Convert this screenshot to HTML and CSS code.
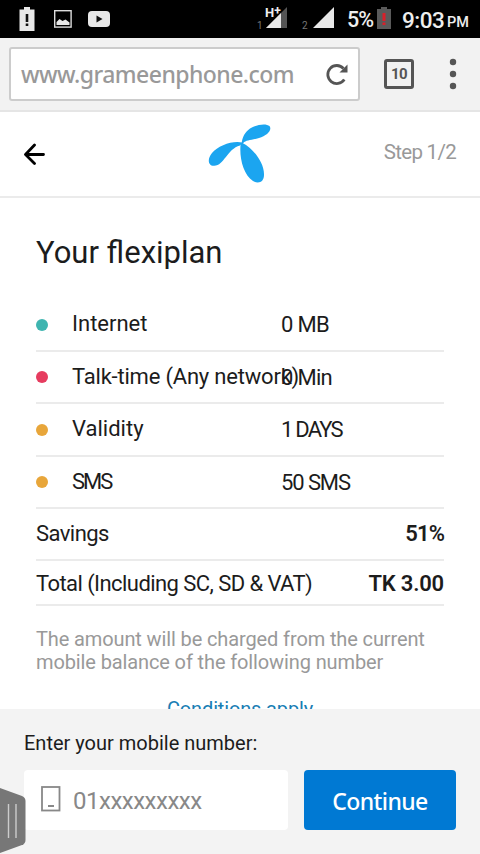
FILE: index.html
```html
<!DOCTYPE html>
<html lang="en">
<head>
<meta charset="utf-8">
<meta name="viewport" content="width=device-width, initial-scale=1">
<title>Your flexiplan</title>
<link rel="stylesheet" href="styles.css">
</head>
<body>
<div class="phone">
  <div class="status">
    <svg class="status-left" width="120" height="38" viewBox="0 0 120 38">
      <path fill="#e8e8e8" d="M19.500 9.500h4.500V7h6v2.500h4.500V31h-15z"/>
      <path fill="#111" d="M25.700 14h2.600v8h-2.600zM25.700 23.500h2.600v2.500h-2.600z"/>
      <rect x="54.700" y="10.700" width="16.400" height="16.400" fill="none" stroke="#ddd" stroke-width="1.400"/>
      <path fill="#e8e8e8" d="M56.500 25v-3l3-3 3 2 3-1.500 4 3v2.500z"/>
      <rect x="88" y="11" width="22" height="16" rx="4" fill="#e8e8e8"/>
      <path fill="#111" d="M96.500 15.500v7l6-3.500z"/>
    </svg>
    <div class="status-right">
      <span class="sim">1</span>
      <span class="signal"><svg width="22" height="21" viewBox="0 0 22 21"><path fill="#555" d="M22 0v21H1z"/><path fill="#e8e8e8" d="M16 6v15H1z"/></svg><b class="net">H<sup>+</sup></b></span>
      <span class="sim sim-two">2</span>
      <svg class="bars" width="21" height="21" viewBox="0 0 21 21"><path fill="#e8e8e8" d="M21 0v21H0z"/></svg>
      <span class="percent">5%</span>
      <svg class="battery" width="14" height="22" viewBox="0 0 14 22"><path fill="#5a5a5a" d="M0 2h4V0h6v2h4v20H0z"/><path fill="#d8202a" d="M5.500 6h3v8h-3zM5.500 15.500h3V18h-3z"/></svg>
      <span class="clock">9:03</span><span class="pm">PM</span>
    </div>
  </div>

  <div class="browser">
    <div class="address">
      <span class="url">www.grameenphone.com</span>
      <svg width="24" height="24" viewBox="0 0 24 24"><path fill="none" stroke="#555" stroke-width="2.800" d="M19.300 17.500A9 9 0 1 1 18.500 6.500"/><path fill="#555" d="M22.500 2.500v8h-8z"/></svg>
    </div>
    <div class="tabs">10</div>
    <svg class="more" width="8" height="32" viewBox="0 0 8 32"><g fill="#555"><circle cx="4" cy="4" r="3.200"/><circle cx="4" cy="16" r="3.200"/><circle cx="4" cy="28" r="3.200"/></g></svg>
  </div>

  <header class="header">
    <svg class="back" width="24" height="24" viewBox="0 0 24 24"><path fill="none" stroke="#000" stroke-width="2.800" stroke-linecap="round" stroke-linejoin="round" d="M10.500 3L1.500 12.500l9 9M2 12.500h17.500"/></svg>
    <svg class="logo" width="64" height="62" viewBox="0 0 64 62"><g fill="#1ba5f0"><path d="M33.500 23C34 15 37 10 42 6.500C48 2.500 58 1 61.500 4C64.500 8 59 13.500 51 16C43 18.500 38 18 35.300 21z"/><path d="M34.500 20.500C25 18 10 23.500 4 31C-1 37 0 44 6 43.700C16 44 19 27 32 23.500z"/><path d="M32.700 21C31 35 35 52 45 59C50 62 56 60.500 56 53C56.500 41 45 26 34.500 21z"/></g></svg>
    <span class="step">Step 1/2</span>
  </header>

  <main class="plan">
    <h1>Your flexiplan</h1>
    <ul class="items">
      <li class="item"><i class="dot teal"></i><span class="label">Internet</span><span class="value">0 MB</span></li>
      <li class="item"><i class="dot red"></i><span class="label long">Talk-time (Any network)</span><span class="value">0 Min</span></li>
      <li class="item"><i class="dot amber"></i><span class="label">Validity</span><span class="value days">1 DAYS</span></li>
      <li class="item"><i class="dot amber"></i><span class="label caps">SMS</span><span class="value sms">50 SMS</span></li>
    </ul>
    <div class="sum savings"><span>Savings</span><b>51%</b></div>
    <div class="sum total"><span>Total (Including SC, SD &amp; VAT)</span><b>TK 3.00</b></div>
    <p class="note">The amount will be charged from the current<br>mobile balance of the following number</p>
    <a class="conditions">Conditions apply</a>
  </main>

  <footer class="footer">
    <label class="prompt">Enter your mobile number:</label>
    <div class="form">
      <div class="field">
        <svg width="20" height="26" viewBox="0 0 20 26"><rect x="1" y="1" width="17.500" height="23.500" fill="none" stroke="#888" stroke-width="1.800"/><path stroke="#888" stroke-width="2" d="M7 20h6"/></svg>
        <span class="placeholder">01xxxxxxxxx</span>
      </div>
      <div class="continue">Continue</div>
    </div>
    <svg class="handle" width="26" height="67" viewBox="0 0 26 67"><path fill="#777" d="M0 1l22 8q3.500 1.500 3.500 5v39q0 3.500-3.500 5L0 66z"/><path stroke="#ccc" stroke-width="1.400" d="M8.500 17v34M16 17v34"/></svg>
  </footer>
</div>
</body>
</html>
```

FILE: styles.css
```css
* { box-sizing: border-box; }
body { margin: 0; background: #fff; font-family: Roboto, "Noto Sans", sans-serif; color: #1c1c1c; }
svg { display: block; flex: none; }
.phone { width: 480px; height: 854px; overflow: hidden; display: flex; flex-direction: column; }
.status { height: 38px; flex: none; background: #000; color: #eee; display: flex; justify-content: space-between; }
.status-right { display: flex; align-items: flex-start; width: 223px; white-space: nowrap; }
.sim { font-size: 10px; line-height: 12px; margin-top: 20px; color: #777; width: 8px; }
.signal { position: relative; margin-top: 7px; }
.net { position: absolute; left: 0; top: -1px; font-size: 13px; line-height: 14px; }
.net sup { font-size: 12px; line-height: 0; vertical-align: 2px; }
.sim-two { margin-left: 15px; width: 11px; }
.bars { margin-top: 7px; }
.percent { font-size: 21.500px; line-height: 38px; font-weight: 500; margin-left: 13px; width: 30px; letter-spacing: -1px; padding-top: 1px; }
.battery { margin-top: 7px; }
.clock { font-size: 22.500px; line-height: 40px; margin-left: 11px; width: 45px; font-weight: 500; letter-spacing: -.5px; }
.pm { font-size: 14.500px; line-height: 45px; font-weight: 500; }

.browser { height: 74px; flex: none; background: #f2f2f2; border-bottom: 2px solid #e5e5e5; display: flex; align-items: center; padding: 0 23px 0 9px; }
.address { width: 351px; height: 54px; background: #fff; border: 2px solid #ccc; border-radius: 3px; display: flex; align-items: center; justify-content: space-between; padding: 0 9px 0 10px; }
.url { font: 500 23px/50px "Noto Sans", sans-serif; letter-spacing: -.55px; color: #999; white-space: nowrap; }
.tabs { margin-left: 24px; width: 30px; height: 30px; border: 3px solid #555; border-radius: 3px; font-weight: 700; font-size: 15px; line-height: 24px; text-align: center; letter-spacing: -.5px; color: #555; }
.more { margin-left: auto; }

.header { height: 86px; flex: none; border-bottom: 2px solid #ebebeb; display: grid; grid-template-columns: 184px 1fr 184px; align-items: center; padding: 0 24px; }
.logo { justify-self: center; margin-top: -2px; }
.step { justify-self: end; font-size: 20.500px; line-height: 24px; letter-spacing: -.7px; color: #999; margin-top: -4px; white-space: nowrap; }

.plan { height: 511px; flex: none; overflow: hidden; padding: 0 36px; }
h1 { margin: 34px 0 25px; font-size: 31px; line-height: 42px; font-weight: 400; white-space: nowrap; }
.items { list-style: none; margin: 0; padding: 0; }
.item { height: 52.500px; border-bottom: 2px solid #ebebeb; display: grid; grid-template-columns: 36px 209px 1fr; align-items: center; font-size: 22px; line-height: 26px; white-space: nowrap; }
.dot { width: 12px; height: 12px; border-radius: 50%; margin-top: 1px; }
.teal { background: #3fb5b0; }
.red { background: #e63c5f; }
.amber { background: #e8a63a; }
.long { letter-spacing: -.2px; }
.caps { letter-spacing: -2px; }
.value { margin-top: 2px; letter-spacing: -.7px; }
.days { letter-spacing: -1.800px; }
.sms { letter-spacing: -1.100px; }
.sum { display: flex; justify-content: space-between; align-items: center; border-bottom: 2px solid #ebebeb; font-size: 22px; line-height: 26px; white-space: nowrap; }
.sum b { font-weight: 600; }
.savings { height: 51.500px; letter-spacing: -.55px; }
.savings b { letter-spacing: -.9px; }
.total { height: 45px; padding-top: 3px; letter-spacing: -.57px; }
.total b { letter-spacing: -.2px; }
.note { margin: 22px 0 22px; font-size: 20px; line-height: 23px; letter-spacing: -.12px; color: #999; white-space: nowrap; }
.conditions { display: block; text-align: center; font-size: 20px; line-height: 26px; letter-spacing: -.15px; color: #197eb4; }

.footer { position: relative; flex: 1; background: #f3f3f3; padding: 20px 24px 0; }
.prompt { display: block; font-size: 20px; line-height: 28px; white-space: nowrap; }
.form { display: flex; justify-content: space-between; margin-top: 13px; }
.field { width: 264px; height: 60px; background: #fff; border-radius: 4px; display: flex; align-items: center; padding: 0 0 3px 17px; }
.placeholder { margin: 5px 0 0 12px; font-size: 24px; letter-spacing: -.5px; color: #888; }
.continue { width: 152px; height: 60px; border-radius: 4px; background: #0079d3; color: #fff; font: 500 23px/62px "Noto Sans", sans-serif; letter-spacing: -.6px; text-align: center; }
.handle { position: absolute; left: 0; top: 78px; }
```
